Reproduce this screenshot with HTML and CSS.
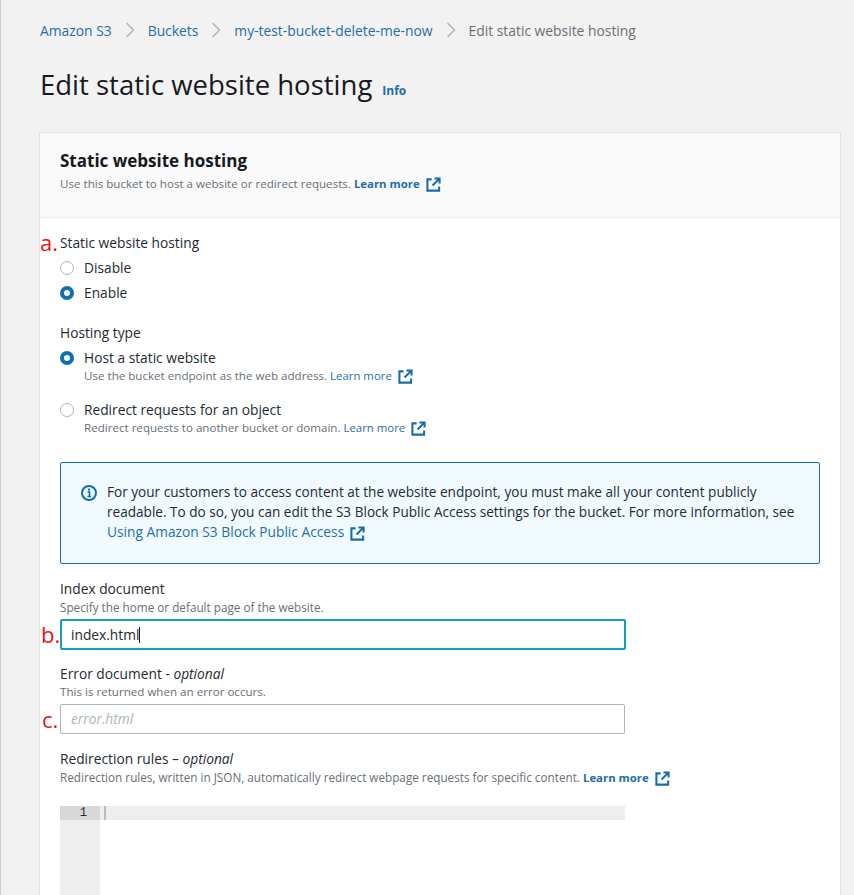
FILE: index.html
```html
<!DOCTYPE html>
<html>
<head>
    <title>Edit static website hosting</title>
    <link rel="stylesheet" href="styles.css">
</head>
<body>
    <svg class="sprites" width="0" height="0">
        <symbol id="ext" viewBox="0 0 16 16">
            <path d="M6 2.5H1.5V14.5H14V10" fill="none" stroke="currentColor" stroke-width="2.2"/>
            <path d="M9 1.5h5.5V7M14 2L7 9" fill="none" stroke="currentColor" stroke-width="2.2"/>
        </symbol>
    </svg>

    <nav class="crumbs">
        <a href="#">Amazon S3</a>
        <svg class="chev" viewBox="0 0 10 16"><path d="M1.5 1l7 7-7 7" fill="none" stroke="currentColor" stroke-width="1.5"/></svg>
        <a href="#">Buckets</a>
        <svg class="chev" viewBox="0 0 10 16"><path d="M1.5 1l7 7-7 7" fill="none" stroke="currentColor" stroke-width="1.5"/></svg>
        <a href="#">my-test-bucket-delete-me-now</a>
        <svg class="chev" viewBox="0 0 10 16"><path d="M1.5 1l7 7-7 7" fill="none" stroke="currentColor" stroke-width="1.5"/></svg>
        <span>Edit static website hosting</span>
    </nav>

    <div class="title-row">
        <h1>Edit static website hosting</h1>
        <a class="info" href="#">Info</a>
    </div>

    <section class="card">
        <header class="card-head">
            <h2>Static website hosting</h2>
            <p class="hint">Use this bucket to host a website or redirect requests. <a class="bold-link" href="#">Learn more</a><svg class="ext"><use href="#ext"/></svg></p>
        </header>

        <div class="card-body">
            <div class="field-label">
                <span class="mark mark-a">a.</span>
                Static website hosting
            </div>
            <div class="radio-row first"><span class="radio"></span>Disable</div>
            <div class="radio-row"><span class="radio on"></span>Enable</div>

            <div class="field-label type-label">Hosting type</div>
            <div class="radio-row first">
                <span class="radio on"></span>
                <div>
                    Host a static website
                    <p class="hint">Use the bucket endpoint as the web address. <a href="#">Learn more</a><svg class="ext"><use href="#ext"/></svg></p>
                </div>
            </div>
            <div class="radio-row second">
                <span class="radio"></span>
                <div>
                    Redirect requests for an object
                    <p class="hint">Redirect requests to another bucket or domain. <a href="#">Learn more</a><svg class="ext"><use href="#ext"/></svg></p>
                </div>
            </div>

            <div class="alert">
                <svg class="alert-icon" viewBox="0 0 16 16">
                    <circle cx="8" cy="8" r="7" fill="none" stroke="currentColor" stroke-width="2"/>
                    <path d="M6.5 7h2v4.5M6.5 11.5h3.5" fill="none" stroke="currentColor" stroke-width="1.6"/>
                    <rect x="7" y="3.6" width="2" height="2" fill="currentColor"/>
                </svg>
                <p>For your customers to access content at the website endpoint, you must make all your content publicly readable. To do so, you can edit the S3 Block Public Access settings for the bucket. For more information, see <a class="alert-link" href="#">Using Amazon S3 Block Public Access</a><svg class="ext"><use href="#ext"/></svg></p>
            </div>

            <div class="field-label">Index document</div>
            <p class="hint hint-wide">Specify the home or default page of the website.</p>
            <div class="input-wrap index-wrap">
                <span class="mark mark-b">b.</span>
                <div class="input focus">index.html<span class="caret"></span></div>
            </div>

            <div class="field-label error-label">Error document - <i>optional</i></div>
            <p class="hint">This is returned when an error occurs.</p>
            <div class="input-wrap">
                <span class="mark mark-c">c.</span>
                <div class="input placeholder">error.html</div>
            </div>

            <div class="field-label rules-label">Redirection rules – <i>optional</i></div>
            <p class="hint hint-wide">Redirection rules, written in JSON, automatically redirect webpage requests for specific content. <a class="bold-link" href="#">Learn more</a><svg class="ext"><use href="#ext"/></svg></p>

            <div class="editor">
                <div class="gutter"><span class="line-no">1</span></div>
                <div class="code"><div class="active-line"><span class="code-caret"></span></div></div>
            </div>
        </div>
    </section>
</body>
</html>
```

FILE: styles.css
```css
html, body {
    height: 895px;
    overflow: hidden;
}
body {
    margin: 0;
    padding: 0 14px 0 39px;
    background-color: #f2f2f2;
    border-left: 1px solid #cfcfcf;
    font-family: "Open Sans", Arial, sans-serif;
    font-size: 13.75px;
    color: #232b33;
    box-sizing: border-box;
}
a {
    color: #1f6fa8;
    text-decoration: none;
}
p {
    margin: 0;
}
.sprites {
    position: absolute;
}

.crumbs {
    display: flex;
    align-items: center;
    height: 20px;
    padding-top: 20px;
    font-size: 13.85px;
    color: #687078;
}
.chev {
    width: 10px;
    height: 16px;
    margin: 0 13px;
    color: #aab7b8;
}

.title-row {
    display: flex;
    align-items: baseline;
    margin-top: 24px;
    height: 68px;
}
h1 {
    margin: 0;
    font-size: 27.5px;
    font-weight: 400;
    line-height: 42px;
    color: #16191f;
}
.info {
    margin-left: 10px;
    font-size: 12px;
    font-weight: 700;
}

.card {
    background: #fff;
    height: 763px;
    overflow: hidden;
    box-sizing: border-box;
    border: 1px solid #e2e2e2;
    border-bottom: 0;
    width: 802px;
    margin-left: -1px;
}
.card-head {
    height: 85px;
    box-sizing: border-box;
    padding: 18px 20px 0;
    background: #fafafa;
    border-bottom: 1px solid #eaeded;
}
h2 {
    margin: 0;
    font-size: 17px;
    font-weight: 700;
    line-height: 20px;
    color: #16191f;
}
.hint {
    font-size: 11.6px;
    line-height: 16px;
    color: #687078;
}
.hint-wide {
    font-size: 11.72px;
}
.card-head .hint {
    margin-top: 5px;
}
.hint a {
    font-size: 11.4px;
}
.bold-link {
    font-weight: 700;
}
.ext {
    width: 15px;
    height: 15px;
    margin-left: 6px;
    vertical-align: -4px;
    color: #1a6da3;
}

.card-body {
    padding: 15px 20px 0;
}
.field-label {
    position: relative;
    line-height: 20px;
}
.mark {
    position: absolute;
    font-size: 22px;
    line-height: 24px;
    color: #e8131b;
}
.mark-a {
    left: -20px;
    top: -3px;
}
.mark-b {
    left: -19px;
    top: 3px;
}
.mark-c {
    left: -18px;
    top: 3px;
}

.radio-row {
    display: flex;
    line-height: 20px;
    margin-top: 5px;
}
.radio-row.second {
    margin-top: 16px;
}
.radio {
    flex: none;
    width: 14px;
    height: 14px;
    margin: 3px 10px 0 0;
    box-sizing: border-box;
    border: 1px solid #aab7b8;
    border-radius: 50%;
    background: #fff;
}
.radio.on {
    border: 4px solid #0f6fb3;
}
.type-label {
    margin-top: 20px;
}

.alert {
    display: flex;
    gap: 10px;
    height: 102px;
    box-sizing: border-box;
    margin: 26px 0 15px;
    padding: 19px 20px;
    background: #f1faff;
    border: 1px solid #1a6da3;
    border-radius: 2px;
    font-size: 13.6px;
    line-height: 20px;
}
.alert-link {
    font-size: 13.75px;
}
.alert-icon {
    flex: none;
    width: 16px;
    height: 16px;
    margin-top: 3px;
    color: #0f6fa8;
}

.input-wrap {
    position: relative;
    width: 565px;
    margin-top: 4px;
}
.index-wrap {
    width: 566px;
}
.input {
    height: 30px;
    box-sizing: border-box;
    padding: 0 10px;
    line-height: 28px;
    background: #fff;
    border: 1px solid #aab7b8;
    border-radius: 2px;
}
.input.focus {
    height: 31px;
    border: 2px solid #0f9fbd;
    padding: 0 9px;
    line-height: 27px;
}
.caret {
    display: inline-block;
    width: 1px;
    height: 16px;
    background: #16191f;
    vertical-align: -3px;
}
.placeholder {
    color: #aab7b8;
    font-style: italic;
}
.error-label {
    margin-top: 14px;
}
.rules-label {
    margin-top: 15px;
}

.editor {
    display: flex;
    width: 565px;
    height: 90px;
    margin-top: 20px;
}
.gutter {
    width: 40px;
    background: #eeeeee;
}
.line-no {
    display: block;
    height: 14px;
    padding-right: 13px;
    text-align: right;
    font-family: "Liberation Mono", monospace;
    font-size: 12px;
    line-height: 15px;
    background: #d8d8d8;
}
.code {
    flex: 1;
}
.active-line {
    height: 14px;
    background: #eeeeee;
}
.code-caret {
    display: block;
    width: 2px;
    height: 14px;
    margin-left: 4px;
    background: #b4bdbd;
}
```
